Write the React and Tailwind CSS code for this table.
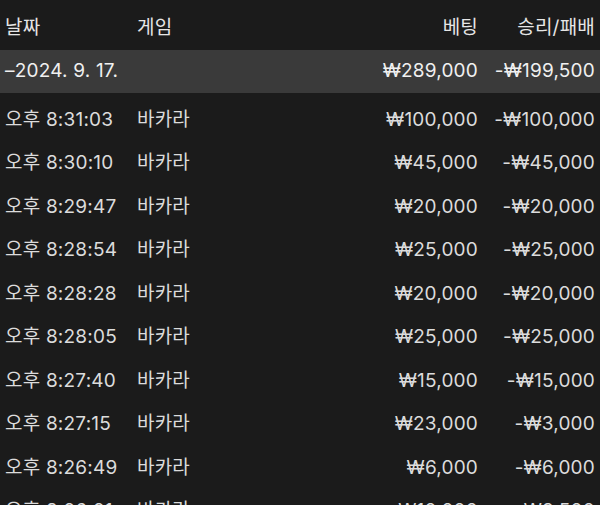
import React from 'react'

const rows = [
  { time: '오후 8:31:03', bet: '₩100,000', win: '-₩100,000' },
  { time: '오후 8:30:10', bet: '₩45,000', win: '-₩45,000' },
  { time: '오후 8:29:47', bet: '₩20,000', win: '-₩20,000' },
  { time: '오후 8:28:54', bet: '₩25,000', win: '-₩25,000' },
  { time: '오후 8:28:28', bet: '₩20,000', win: '-₩20,000' },
  { time: '오후 8:28:05', bet: '₩25,000', win: '-₩25,000' },
  { time: '오후 8:27:40', bet: '₩15,000', win: '-₩15,000' },
  { time: '오후 8:27:15', bet: '₩23,000', win: '-₩3,000' },
  { time: '오후 8:26:49', bet: '₩6,000', win: '-₩6,000' },
  { time: '오후 8:26:21', bet: '₩10,000', win: '-₩3,500' },
]

const font = { fontFamily: "Inter, 'Noto Sans CJK KR', sans-serif" }

function Row({ date, game, bet, win, className = '' }) {
  return (
    <div className={`grid grid-cols-[132px_1fr_auto_117px] items-center px-[5px] ${className}`}>
      <div className="whitespace-nowrap">{date}</div>
      <div className="whitespace-nowrap">{game}</div>
      <div className="text-right whitespace-nowrap">{bet}</div>
      <div className="text-right whitespace-nowrap">{win}</div>
    </div>
  )
}

export default function App() {
  return (
    <div
      className="w-[600px] h-[505px] overflow-hidden bg-[#1b1b1b] text-[19px] text-[#dcdcdc] tracking-[0.2px]"
      style={font}
    >
      {/* header */}
      <Row date="날짜" game="게임" bet="베팅" win="승리/패배" className="h-[50px] pt-[6px] text-[#e6e6e6]" />

      {/* day summary */}
      <Row
        date="–2024. 9. 17."
        game=""
        bet="₩289,000"
        win="-₩199,500"
        className="h-[43px] bg-[#3a3a3a] text-[#f0f0f0]"
      />

      <div className="pt-[5px]">
        {rows.map((r) => (
          <Row key={r.time} date={r.time} game="바카라" bet={r.bet} win={r.win} className="h-[43.5px]" />
        ))}
      </div>
    </div>
  )
}
